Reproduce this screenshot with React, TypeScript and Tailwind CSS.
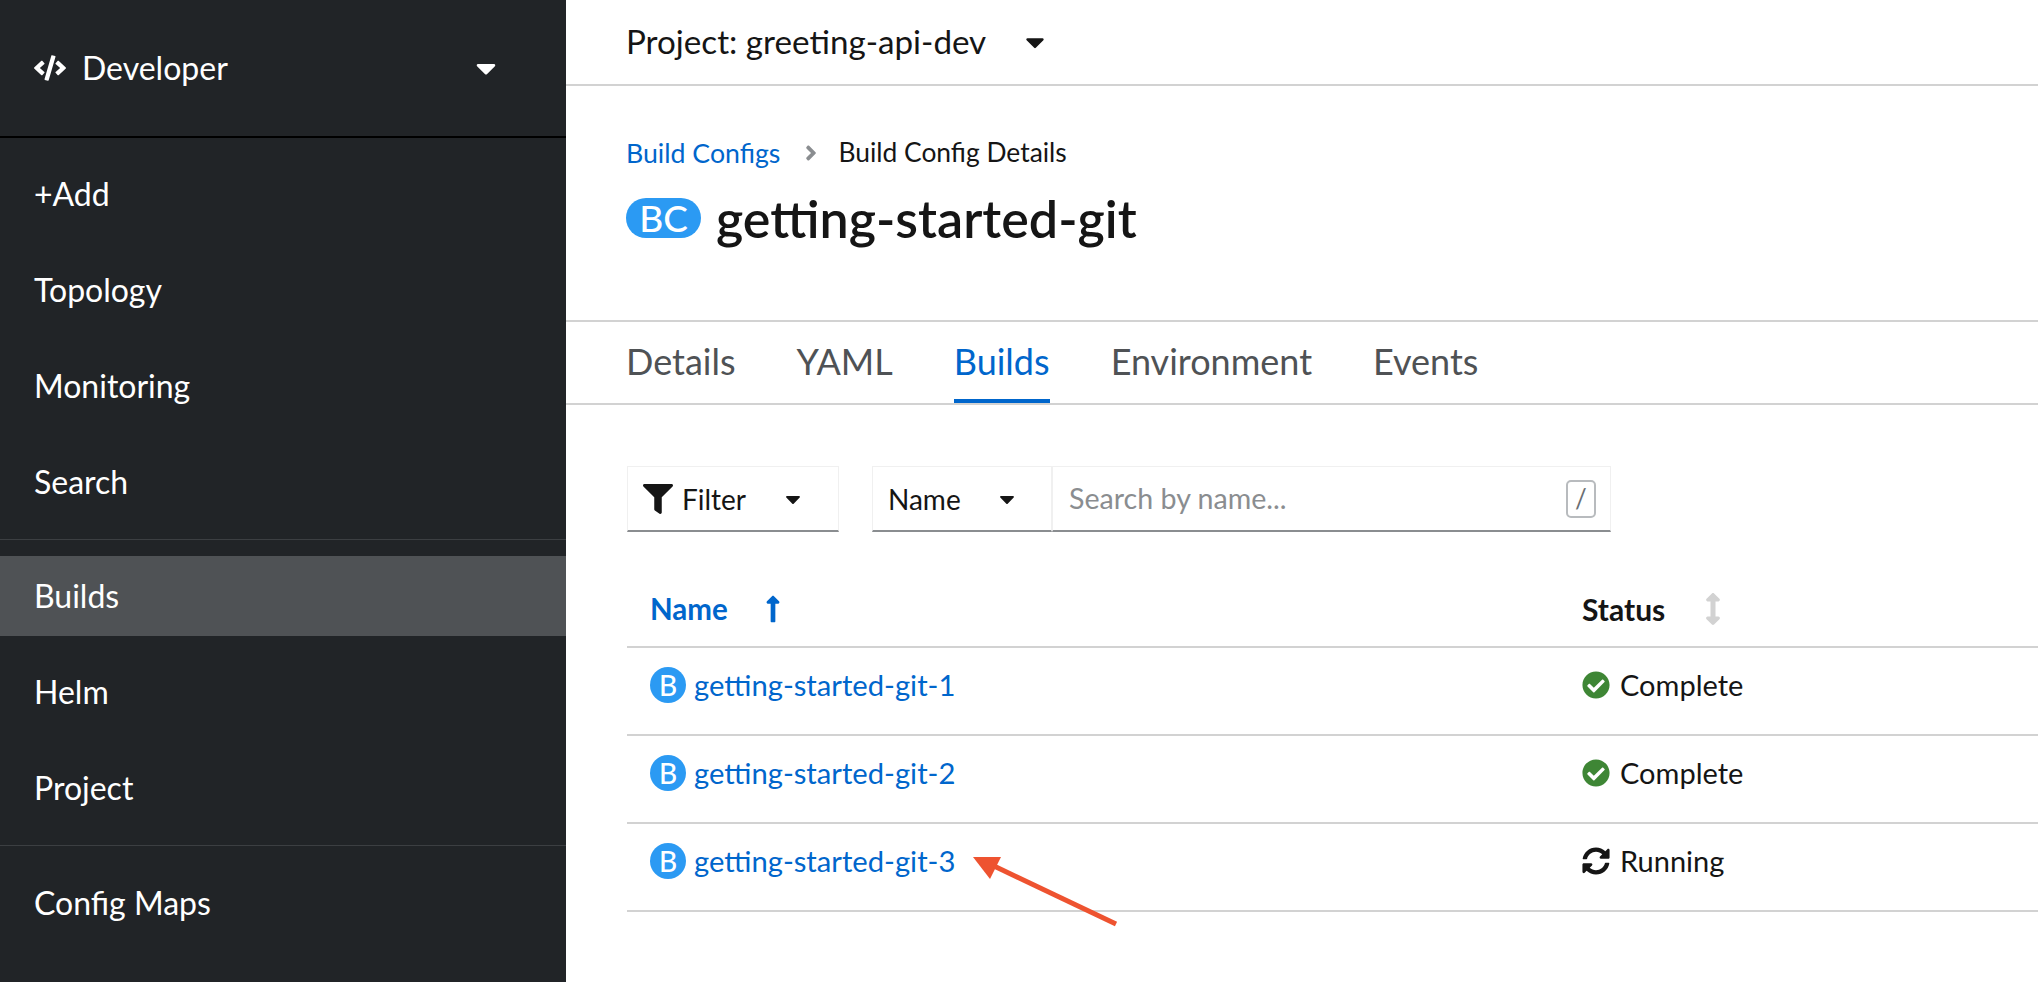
import { FaArrowsAltV, FaCaretDown, FaCheckCircle, FaCode, FaFilter, FaLongArrowAltUp, FaSyncAlt, FaAngleRight } from "react-icons/fa";

const font = "font-['Lato','Noto_Sans',sans-serif]";

function NavItem({ label }: { label: string }) {
  return <div className="h-[96px] flex items-center pl-[34px] text-[32px] text-white">{label}</div>;
}

function Sidebar() {
  return (
    <aside className="w-[566px] h-[982px] shrink-0 bg-[#212427] overflow-hidden">
      <div className="h-[138px] flex items-center justify-between pl-[34px] pr-[64px] border-b-2 border-black">
        <div className="flex items-center gap-[16px] text-[32px] text-white">
          <FaCode className="w-[32px] h-[32px]" />
          Developer
        </div>
        <FaCaretDown className="w-[32px] h-[32px] text-white" />
      </div>
      <div className="pt-[8px] pb-[9px]">
        {["+Add", "Topology", "Monitoring", "Search"].map((l) => (
          <NavItem key={l} label={l} />
        ))}
      </div>
      <div className="h-px bg-[#3c3f42]" />
      <div className="pt-[16px] pb-[9px]">
        <div className="h-[80px] flex items-center pl-[34px] text-[32px] text-white bg-[#4f5255]">Builds</div>
        <div className="mt-[8px]">
          <NavItem label="Helm" />
          <NavItem label="Project" />
        </div>
      </div>
      <div className="h-px bg-[#3c3f42]" />
      <div className="pt-[9px]">
        <NavItem label="Config Maps" />
      </div>
    </aside>
  );
}

function Tab({ label, active }: { label: string; active?: boolean }) {
  return (
    <div className={`h-full flex items-center text-[36px] border-b-[4px] ${active ? "text-[#06c] border-[#06c]" : "text-[#4f5255] border-transparent"}`}>
      {label}
    </div>
  );
}

function ResourceBadge({ label }: { label: string }) {
  return (
    <span className="w-[36px] h-[36px] shrink-0 rounded-full bg-[#2b9af3] text-white flex items-center justify-center text-[28px] font-medium">
      {label}
    </span>
  );
}

function Row({ name, status }: { name: string; status: "Complete" | "Running" }) {
  return (
    <div className="h-[88px] flex items-start border-b-2 border-[#d2d2d2] pt-[15px]">
      <div className="w-[955px] pl-[23px] flex items-center gap-[8px]">
        <ResourceBadge label="B" />
        <span className="text-[29.2px] text-[#06c]">{name}</span>
      </div>
      <div className="flex items-center gap-[10px] text-[29px] text-[#151515] h-[36px] mt-[4px]">
        {status === "Complete" ? (
          <FaCheckCircle className="w-[28px] h-[28px] text-[#3e8635]" />
        ) : (
          <FaSyncAlt className="w-[28px] h-[28px] text-[#151515]" />
        )}
        {status}
      </div>
    </div>
  );
}

export default function App() {
  return (
    <div className={`relative w-[2038px] h-[982px] overflow-hidden flex bg-white ${font}`}>
      <Sidebar />
      <main className="flex-1 min-w-0">
        <div className="h-[86px] pl-[60px] flex items-center gap-[34px] border-b-2 border-[#d2d2d2] text-[33.2px] text-[#151515]">
          Project: greeting-api-dev
          <FaCaretDown className="w-[30px] h-[30px]" />
        </div>
        <div className="h-[236px] pl-[60px] pt-[48px] border-b-2 border-[#d2d2d2]">
          <div className="flex items-center text-[26.7px] h-[38px]">
            <span className="text-[#06c]">Build Configs</span>
            <FaAngleRight className="w-[24px] h-[24px] text-[#8a8d90] ml-[19px] mr-[15px]" />
            <span className="text-[#151515] text-[26.4px]">Build Config Details</span>
          </div>
          <div className="flex items-center gap-[15px] mt-[18px]">
            <span className="w-[75px] h-[40px] rounded-full bg-[#2b9af3] text-white flex items-center justify-center text-[37px] font-medium">BC</span>
            <h1 className="text-[52px] leading-[56px] font-semibold text-[#151515]">getting-started-git</h1>
          </div>
        </div>
        <div className="h-[83px] pl-[60px] flex gap-[61px] border-b-2 border-[#d2d2d2]">
          <Tab label="Details" />
          <Tab label="YAML" />
          <Tab label="Builds" active />
          <Tab label="Environment" />
          <Tab label="Events" />
        </div>
        <div className="ml-[61px] mt-[61px] flex h-[66px]">
          <div className="w-[212px] flex items-center justify-between pl-[15px] pr-[33px] border border-[#f0f0f0] border-b-2 border-b-[#8a8d90] text-[28px] text-[#151515]">
            <span className="flex items-center gap-[9px]">
              <FaFilter className="w-[30px] h-[30px]" />
              Filter
            </span>
            <FaCaretDown className="w-[24px] h-[24px]" />
          </div>
          <div className="w-[180px] ml-[33px] flex items-center justify-between pl-[15px] pr-[32px] border border-[#f0f0f0] border-b-2 border-b-[#8a8d90] text-[28px] text-[#151515]">
            Name
            <FaCaretDown className="w-[24px] h-[24px]" />
          </div>
          <div className="w-[559px] flex items-center justify-between pl-[16px] pr-[14px] border border-[#f0f0f0] border-b-2 border-b-[#8a8d90] text-[28.6px] text-[#8a8d90]">
            Search by name...
            <span className="w-[30px] h-[38px] rounded-[5px] border-2 border-[#b8bbbe] flex items-center justify-center text-[26px] text-[#6a6e73]">/</span>
          </div>
        </div>
        <div className="ml-[61px] mt-[46px]">
          <div className="h-[70px] flex items-center border-b-2 border-[#d2d2d2] pb-[6px]">
            <div className="w-[955px] pl-[23px] flex items-center gap-[32px] text-[#06c] text-[29.5px] font-bold">
              Name
              <FaLongArrowAltUp className="w-[26px] h-[30px]" />
            </div>
            <div className="flex items-center gap-[35px] text-[30px] font-bold text-[#151515]">
              Status
              <FaArrowsAltV className="w-[26px] h-[32px] text-[#d2d2d2]" />
            </div>
          </div>
          <Row name="getting-started-git-1" status="Complete" />
          <Row name="getting-started-git-2" status="Complete" />
          <Row name="getting-started-git-3" status="Running" />
        </div>
      </main>
      <svg className="absolute left-[965px] top-[850px] w-[160px] h-[85px]" viewBox="965 850 160 85">
        <polygon points="973,857 1001,857 990,879" fill="#ee5330" />
        <line x1="994" y1="866" x2="1116" y2="924" stroke="#ee5330" strokeWidth="5" />
      </svg>
    </div>
  );
}
